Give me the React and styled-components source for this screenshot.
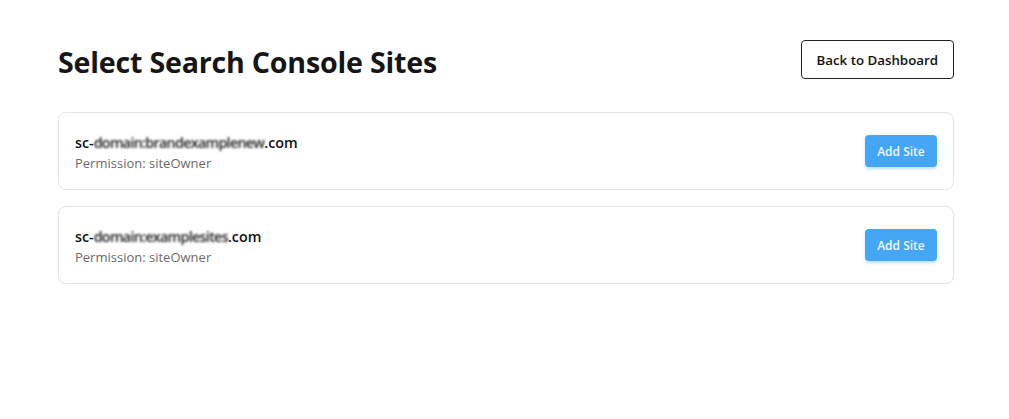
import React from 'react';
import styled, { createGlobalStyle } from 'styled-components';

const GlobalStyle = createGlobalStyle`
   body {
      margin: 0;
      background: #fff;
      font-family: "Open Sans", "Noto Sans", "Liberation Sans", sans-serif;
      color: #1a1a1a;
   }
`;

const TopShadow = styled.div`
   height: 0;
   box-shadow: 0 0 12px rgba(0, 0, 0, 0.12);
`;

const Page = styled.div`
   padding: 40px 55px 40px 58px;
`;

const Header = styled.div`
   display: flex;
   justify-content: space-between;
   align-items: flex-start;
   height: 39px;
   margin-bottom: 33px;

   h1 {
      margin: 2px 0 0;
      line-height: 39px;
      font-size: 28.6px;
      font-weight: 700;
      color: #161616;
      letter-spacing: -0.2px;
   }
`;

const OutlineButton = styled.button`
   height: 39px;
   padding: 0 15px;
   background: #fff;
   border: 1px solid #222;
   border-radius: 4px;
   font-family: inherit;
   font-size: 13.3px;
   font-weight: 600;
   color: #111;
   cursor: pointer;
`;

const List = styled.div`
   display: flex;
   flex-direction: column;
   gap: 16px;
`;

const Card = styled.div`
   display: flex;
   justify-content: space-between;
   align-items: center;
   height: 78px;
   box-sizing: border-box;
   padding: 0 16px;
   border: 1px solid #e4e4e4;
   border-radius: 8px;
`;

const Info = styled.div`
   padding-top: 4px;
`;

const SiteName = styled.div`
   font-size: 14.3px;
   font-weight: 600;
   color: #111;
   line-height: 21px;
`;

const Blurred = styled.span`
   display: inline-block;
   filter: blur(0.8px);
   letter-spacing: -0.7px;
   color: #222;
`;

const Permission = styled.div`
   font-size: 13px;
   color: #6b6b6b;
   line-height: 21px;
`;

const AddButton = styled.button`
   width: 72px;
   height: 32px;
   background: #44a7f5;
   border: none;
   border-radius: 4px;
   box-shadow: 0 2px 3px rgba(66, 165, 245, 0.35);
   color: #eef6ff;
   font-family: inherit;
   font-size: 12px;
   font-weight: 600;
   cursor: pointer;
`;

const sites = [
   { prefix: 'sc-', hidden: 'domain:brandexamplenew', suffix: '.com' },
   { prefix: 'sc-', hidden: 'domain:examplesites', suffix: '.com' },
];

const App = () => {
   return (
      <>
         <GlobalStyle />
         <TopShadow />
         <Page>
            <Header>
               <h1>Select Search Console Sites</h1>
               <OutlineButton>Back to Dashboard</OutlineButton>
            </Header>
            <List>
               {sites.map((site, i) => (
                  <Card key={i}>
                     <Info>
                        <SiteName>
                           {site.prefix}
                           <Blurred>{site.hidden}</Blurred>
                           {site.suffix}
                        </SiteName>
                        <Permission>Permission: siteOwner</Permission>
                     </Info>
                     <AddButton>Add Site</AddButton>
                  </Card>
               ))}
            </List>
         </Page>
      </>
   );
};

export default App;
